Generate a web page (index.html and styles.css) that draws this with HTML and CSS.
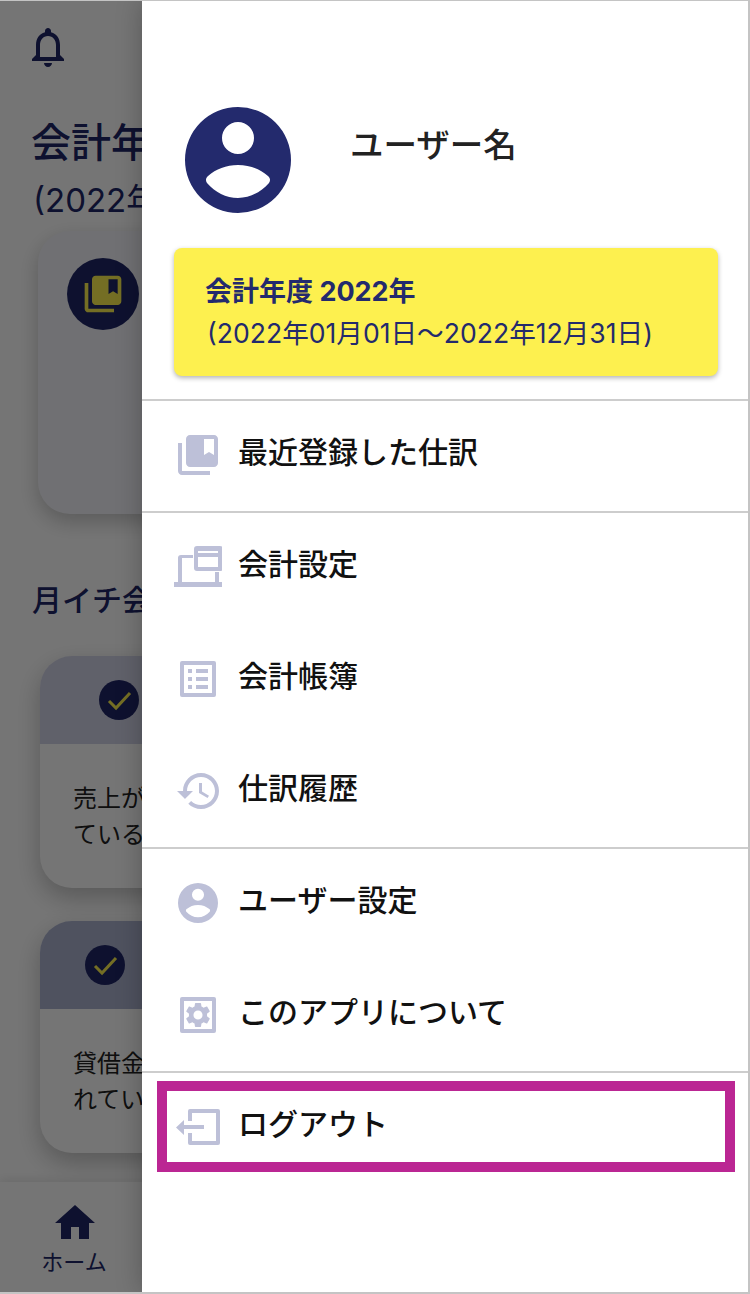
FILE: index.html
```html
<!DOCTYPE html>
<html lang="ja">

<head>
    <meta charset="UTF-8">
    <meta name="viewport" content="width=device-width, initial-scale=1.0">
    <title>メニュー</title>
    <link rel="stylesheet" href="styles.css">
</head>

<body>
    <div class="screen">
        <!-- page behind the drawer -->
        <div class="page">
            <div class="page-top">
                <svg class="bell" viewBox="0 0 24 24">
                    <path d="M12 22c1.1 0 2-.9 2-2h-4c0 1.1.9 2 2 2zm6-6v-5c0-3.07-1.63-5.64-4.5-6.32V4c0-.83-.67-1.5-1.5-1.5s-1.5.67-1.5 1.5v.68C7.64 5.36 6 7.92 6 11v5l-2 2v1h16v-1l-2-2zm-2 1H8v-6c0-2.48 1.51-4.5 4-4.5s4 2.02 4 4.5v6z" />
                </svg>
            </div>
            <h1 class="page-title">会計年度</h1>
            <p class="page-sub">(2022年</p>
            <div class="summary-card">
                <span class="summary-icon">
                    <svg viewBox="0 0 24 24">
                        <path d="M4 6H2v14c0 1.1.9 2 2 2h14v-2H4V6zm16-4H8c-1.1 0-2 .9-2 2v12c0 1.1.9 2 2 2h12c1.1 0 2-.9 2-2V4c0-1.1-.9-2-2-2zm0 10-2.5-1.5L15 12V4h5v8z" />
                    </svg>
                </span>
            </div>
            <h2 class="section-title">月イチ会</h2>
            <div class="task-card">
                <div class="task-head task-head-a">
                    <span class="check"><svg viewBox="0 0 40 40"><path d="M10 21l7 7 14-15" /></svg></span>
                </div>
                <p class="task-text">売上が<br>ている</p>
            </div>
            <div class="task-card">
                <div class="task-head task-head-b">
                    <span class="check"><svg viewBox="0 0 40 40"><path d="M10 21l7 7 14-15" /></svg></span>
                </div>
                <p class="task-text">貸借金<br>れてい</p>
            </div>
        </div>

        <div class="bottom-nav">
            <div class="nav-item">
                <svg class="nav-icon" viewBox="0 0 24 24">
                    <path d="M10 20v-6h4v6h5v-8h3L12 3 2 12h3v8z" />
                </svg>
                <span>ホーム</span>
            </div>
        </div>

        <div class="scrim"></div>

        <!-- drawer -->
        <nav class="drawer">
            <div class="profile">
                <svg class="avatar" viewBox="0 0 106 106">
                    <path fill-rule="evenodd" d="M53 0a53 53 0 1 0 0 106a53 53 0 1 0 0-106zM53 15a16 16 0 1 1 0 32a16 16 0 1 1 0-32zM23 69C31 62 41 58 53 58C65 58 75 62 83 69C85.500 71 85.500 74 84 76C76 85 65 91 53 91C41 91 30 85 22 76C20.500 74 20.500 71 23 69Z" />
                </svg>
                <div class="user-name">ユーザー名</div>
            </div>

            <div class="year-card">
                <div class="year-title">会計年度 2022年</div>
                <div class="year-range">(2022年01月01日～2022年12月31日)</div>
            </div>

            <div class="menu-group">
                <a class="menu-item">
                    <svg class="menu-icon" viewBox="0 0 24 24">
                        <path d="M4 6H2v14c0 1.1.9 2 2 2h14v-2H4V6zm16-4H8c-1.1 0-2 .9-2 2v12c0 1.1.9 2 2 2h12c1.1 0 2-.9 2-2V4c0-1.1-.9-2-2-2zm0 10-2.5-1.5L15 12V4h5v8z" />
                    </svg>
                    <span>最近登録した仕訳</span>
                </a>
            </div>

            <div class="menu-group">
                <a class="menu-item">
                    <svg class="menu-icon" viewBox="0 0 48 48">
                        <path fill-rule="evenodd" d="M23 3h23a3 3 0 0 1 3 3v19a3 3 0 0 1-3 3H23a3 3 0 0 1-3-3V6a3 3 0 0 1 3-3zm1 5v2h20V8zm0 6v10h20V14z" />
                        <path d="M7 12h12v3H8v24h33V29h4v10h3v5H0v-5h4V15a3 3 0 0 1 3-3z" />
                    </svg>
                    <span>会計設定</span>
                </a>
                <a class="menu-item">
                    <svg class="menu-icon" viewBox="0 0 24 24">
                        <path fill-rule="evenodd" d="M4 3h16a1 1 0 0 1 1 1v16a1 1 0 0 1-1 1H4a1 1 0 0 1-1-1V4a1 1 0 0 1 1-1zm1 2v14h14V5zm2 2h2v2H7zm4 0h6v2h-6zm-4 4h2v2H7zm4 0h6v2h-6zm-4 4h2v2H7zm4 0h6v2h-6z" />
                    </svg>
                    <span>会計帳簿</span>
                </a>
                <a class="menu-item">
                    <svg class="menu-icon" viewBox="-0.5 0 24 24">
                        <path d="M13 3c-4.97 0-9 4.03-9 9H1l3.89 3.89.07.14L9 12H6c0-3.87 3.13-7 7-7s7 3.13 7 7-3.13 7-7 7c-1.93 0-3.68-.79-4.94-2.06l-1.42 1.42C8.27 19.99 10.51 21 13 21c4.97 0 9-4.03 9-9s-4.03-9-9-9zm-1 5v5l4.28 2.54.72-1.21-3.5-2.08V8H12z" />
                    </svg>
                    <span>仕訳履歴</span>
                </a>
            </div>

            <div class="menu-group">
                <a class="menu-item">
                    <svg class="menu-icon menu-icon-user" viewBox="0 0 106 106">
                        <path fill-rule="evenodd" d="M53 0a53 53 0 1 0 0 106a53 53 0 1 0 0-106zM53 15a16 16 0 1 1 0 32a16 16 0 1 1 0-32zM23 69C31 62 41 58 53 58C65 58 75 62 83 69C85.500 71 85.500 74 84 76C76 85 65 91 53 91C41 91 30 85 22 76C20.500 74 20.500 71 23 69Z" />
                    </svg>
                    <span>ユーザー設定</span>
                </a>
                <a class="menu-item">
                    <svg class="menu-icon" viewBox="0 0 24 24">
                        <path fill-rule="evenodd" d="M4 3h16a1 1 0 0 1 1 1v16a1 1 0 0 1-1 1H4a1 1 0 0 1-1-1V4a1 1 0 0 1 1-1zm1 2v14h14V5z" />
                        <path transform="translate(12 12) scale(.63) translate(-12 -12)" d="M19.14 12.94c.04-.3.06-.61.06-.94 0-.32-.02-.64-.07-.94l2.03-1.58c.18-.14.23-.41.12-.61l-1.92-3.32c-.12-.22-.37-.29-.59-.22l-2.39.96c-.5-.38-1.03-.7-1.62-.94l-.36-2.54c-.04-.24-.24-.41-.48-.41h-3.84c-.24 0-.43.17-.47.41l-.36 2.54c-.59.24-1.13.57-1.62.94l-2.39-.96c-.22-.08-.47 0-.59.22L2.74 8.87c-.12.21-.08.47.12.61l2.03 1.58c-.05.3-.09.63-.09.94s.02.64.07.94l-2.03 1.58c-.18.14-.23.41-.12.61l1.92 3.32c.12.22.37.29.59.22l2.39-.96c.5.38 1.03.7 1.62.94l.36 2.54c.05.24.24.41.48.41h3.84c.24 0 .44-.17.47-.41l.36-2.54c.59-.24 1.13-.56 1.62-.94l2.39.96c.22.08.47 0 .59-.22l1.92-3.32c.12-.22.07-.47-.12-.61l-2.01-1.58zM12 15.6c-1.98 0-3.6-1.62-3.6-3.6s1.62-3.6 3.6-3.6 3.6 1.62 3.6 3.6-1.62 3.6-3.6 3.6z" />
                    </svg>
                    <span>このアプリについて</span>
                </a>
            </div>

            <div class="menu-group menu-group-last">
                <a class="menu-item">
                    <svg class="menu-icon" viewBox="0 0 48 48">
                        <path d="M16 6h28a2 2 0 0 1 2 2v32a2 2 0 0 1-2 2H16a2 2 0 0 1-2-2V30h4v8h24V10H18v8h-4V8a2 2 0 0 1 2-2z" />
                        <path d="M10 17v5h20v4H10v6l-8-7.500z" />
                    </svg>
                    <span>ログアウト</span>
                </a>
                <div class="highlight"></div>
            </div>
        </nav>
    </div>
</body>

</html>
```

FILE: styles.css
```css
* {
    margin: 0;
    padding: 0;
    box-sizing: border-box;
}

body {
    font-family: Inter, "Noto Sans CJK JP", sans-serif;
    background-color: #fff;
}

.screen {
    position: relative;
    width: 750px;
    height: 1294px;
    overflow: hidden;
    background-color: #fff;
}

/* page behind the drawer */
.page {
    padding: 23px 0 0 33px;
    color: #202768;
}

.page-top {
    height: 49px;
}

.bell {
    display: block;
    width: 48px;
    height: 48px;
    margin-left: -9px;
    fill: #202768;
}

.page-title {
    margin-top: 43px;
    margin-left: -2px;
    font-size: 40px;
    font-weight: 500;
    line-height: 56px;
    white-space: nowrap;
}

.page-sub {
    margin-top: 2px;
    font-size: 33px;
    line-height: 54px;
    white-space: nowrap;
}

.summary-card {
    width: 400px;
    height: 283px;
    margin: 4px 0 0 5px;
    padding: 27px 0 0 29px;
    background-color: #f4f5fa;
    border-radius: 32px;
    box-shadow: 0 8px 20px rgba(0, 0, 0, 0.22);
}

.summary-icon {
    display: flex;
    justify-content: center;
    align-items: center;
    width: 72px;
    height: 72px;
    background-color: #202768;
    border-radius: 50%;
}

.summary-icon svg {
    width: 44px;
    height: 44px;
    fill: #fdf04f;
}

.section-title {
    margin-top: 66px;
    margin-left: -1px;
    font-size: 30px;
    font-weight: 500;
    line-height: 40px;
    white-space: nowrap;
}

.task-card {
    width: 400px;
    height: 232px;
    margin: 36px 0 0 7px;
    overflow: hidden;
    background-color: #fff;
    border-radius: 32px;
    box-shadow: 0 10px 24px rgba(0, 0, 0, 0.24);
}

.task-card + .task-card {
    margin-top: 33px;
}

.task-head {
    display: flex;
    align-items: center;
    height: 88px;
}

.task-head-a {
    padding-left: 59px;
    background-color: #d2d3e6;
}

.task-head-b {
    padding-left: 45px;
    background-color: #acb3d0;
}

.check {
    display: block;
    width: 40px;
    height: 40px;
    background-color: #202768;
    border-radius: 50%;
}

.check svg {
    display: block;
    width: 40px;
    height: 40px;
    fill: none;
    stroke: #fdf04f;
    stroke-width: 3;
}

.task-text {
    margin-top: 37px;
    padding-left: 33px;
    font-size: 24px;
    line-height: 36px;
    color: #222;
}

.bottom-nav {
    position: absolute;
    left: 0;
    right: 0;
    bottom: 0;
    height: 112px;
    background-color: #fff;
    box-shadow: 0 -2px 10px rgba(0, 0, 0, 0.1);
}

.nav-item {
    display: flex;
    flex-direction: column;
    align-items: center;
    width: 148px;
    color: #202768;
    font-size: 22px;
    line-height: 30px;
}

.nav-icon {
    display: block;
    width: 48px;
    height: 48px;
    margin-top: 17px;
    margin-left: 2px;
    fill: #202768;
}

.scrim {
    position: absolute;
    inset: 0;
    background-color: rgba(0, 0, 0, 0.54);
}

/* drawer */
.drawer {
    position: absolute;
    top: 1px;
    left: 142px;
    bottom: 2px;
    width: 606px;
    background-color: #fff;
    box-shadow: 0 0 24px rgba(0, 0, 0, 0.25);
}

.screen::after {
    content: "";
    position: absolute;
    inset: 0;
    border-top: 1px solid #c4c4c4;
    border-right: 2px solid #c4c4c4;
    border-bottom: 2px solid #c4c4c4;
    pointer-events: none;
}

.profile {
    display: flex;
    align-items: flex-start;
    height: 247px;
    padding: 106px 0 0 43px;
}

.avatar {
    display: block;
    width: 106px;
    height: 106px;
    fill: #232a6d;
}

.user-name {
    margin: 14px 0 0 59px;
    font-size: 33.500px;
    font-weight: 500;
    line-height: 48px;
    color: #222;
}

.year-card {
    width: 544px;
    height: 128px;
    margin-left: 32px;
    padding: 25px 0 0 32px;
    color: #232a6d;
    background-color: #fdf04f;
    border-radius: 8px;
    box-shadow: 0 2px 5px rgba(0, 0, 0, 0.3);
}

.year-title {
    margin-left: -1px;
    font-size: 27px;
    font-weight: 700;
    line-height: 38px;
}

.year-range {
    margin-top: 4px;
    margin-left: 1px;
    font-size: 26.600px;
    line-height: 36px;
    white-space: nowrap;
}

.menu-group {
    border-top: 2px solid #cdcdcd;
}

.year-card + .menu-group {
    margin-top: 23px;
}

.menu-item {
    display: flex;
    align-items: center;
    height: 112px;
    padding-left: 32px;
    font-size: 30px;
    font-weight: 500;
    color: #111;
}

.menu-group .menu-item:first-child {
    margin-top: -2px;
}

.menu-item span {
    margin-left: 16px;
    padding-bottom: 10px;
    white-space: nowrap;
}

.menu-icon {
    display: block;
    flex: none;
    width: 48px;
    height: 48px;
    fill: #bdc0d8;
}

.menu-icon-user {
    width: 40px;
    height: 40px;
    margin: 0 4px;
}

.menu-group-last {
    position: relative;
}

.highlight {
    position: absolute;
    top: 8px;
    left: 15px;
    width: 578px;
    height: 91px;
    border: 10px solid #bb2693;
}
```
